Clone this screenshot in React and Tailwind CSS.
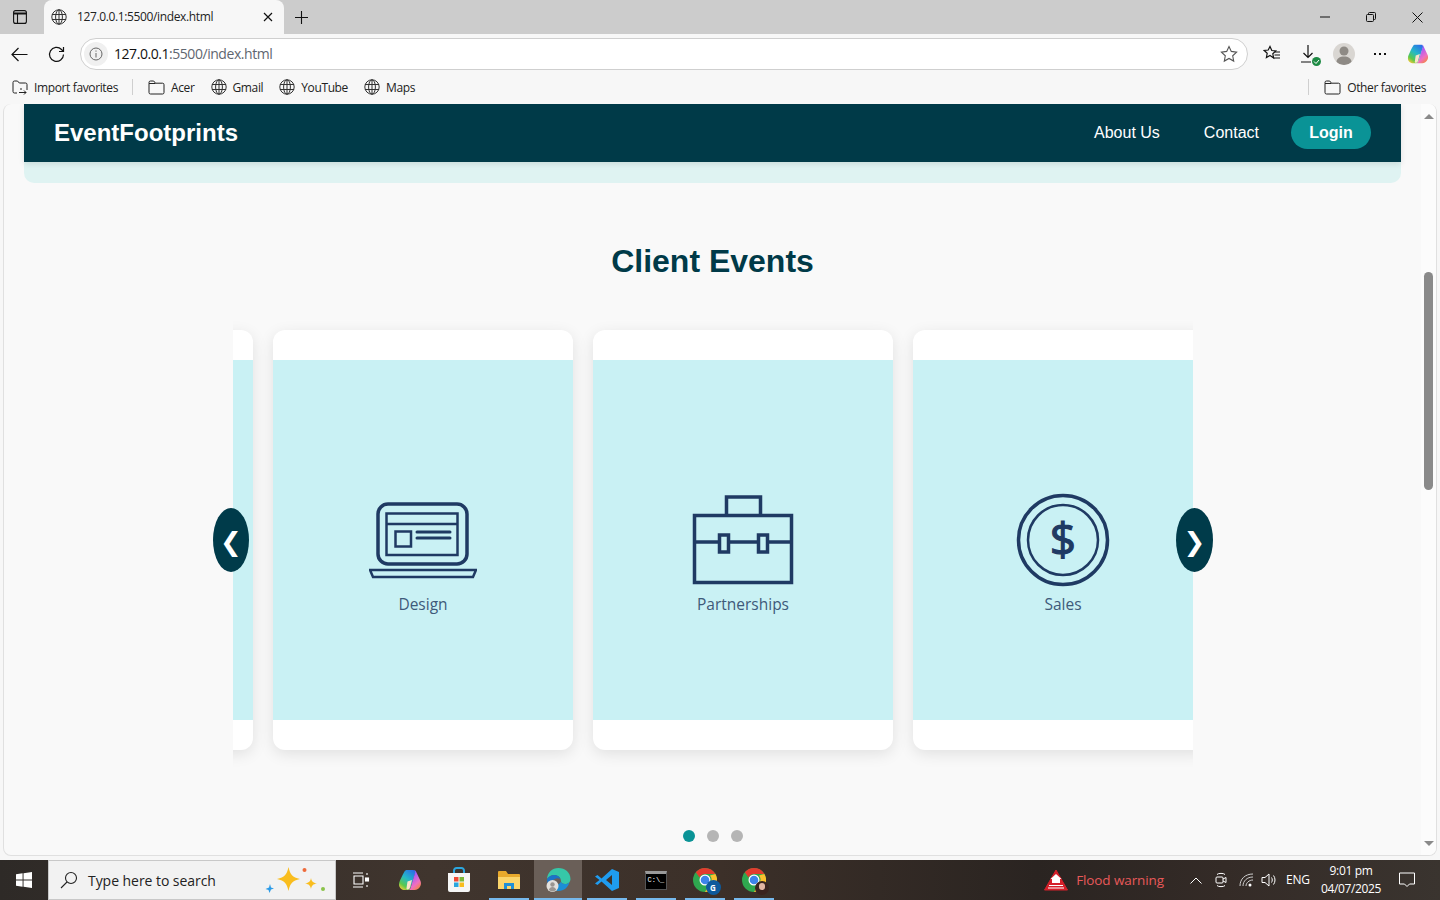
import React from 'react';

const Globe = ({ size = 16, color = '#333' }) => (
  <svg width={size} height={size} viewBox="0 0 16 16" fill="none" stroke={color} strokeWidth="1">
    <circle cx="8" cy="8" r="7.2" />
    <ellipse cx="8" cy="8" rx="3.4" ry="7.2" />
    <path d="M1 5.500h14M1 10.500h14M8 .8v14.400" />
  </svg>
);

const Folder = () => (
  <svg width="17" height="15" viewBox="0 0 17 15" fill="none" stroke="#222" strokeWidth="1">
    <path d="M1 3.500V2.500A1.500 1.500 0 0 1 2.500 1h3.200l1.800 2.200h7A1.500 1.500 0 0 1 16 4.700v7.800a1.500 1.500 0 0 1-1.500 1.500h-12A1.500 1.500 0 0 1 1 12.500V3.500h6.500" />
  </svg>
);

const Copilot = ({ size = 22, id = 'a' }) => (
  <svg width={size} height={size} viewBox="0 0 24 24" fill="none">
    <defs>
      <linearGradient id={`copA${id}`} x1="0.8" y1="0" x2="0.2" y2="1">
        <stop offset="0" stopColor="#2b6fe8" />
        <stop offset="0.45" stopColor="#24b8c8" />
        <stop offset="0.8" stopColor="#5cc94a" />
        <stop offset="1" stopColor="#f0c93a" />
      </linearGradient>
      <linearGradient id={`copB${id}`} x1="0.2" y1="0" x2="0.8" y2="1">
        <stop offset="0" stopColor="#3a6ff0" />
        <stop offset="0.35" stopColor="#b45cf0" />
        <stop offset="0.7" stopColor="#f06fc0" />
        <stop offset="1" stopColor="#f5873a" />
      </linearGradient>
    </defs>
    <path d="M9 2h6c1.400 0 2.200.7 2.600 2L12.500 20c-.5 1.400-1.400 2-2.600 2H7C3.800 22 1 20 1 16.500c0-1.500.4-2.800 1-4C4 8 5.500 5 6.500 3.500 7 2.500 8 2 9 2z" fill={`url(#copA${id})`} />
    <path d="M16 2c1 0 1.600.6 2 1.600L22.500 13c.8 2 .6 4-.4 5.500C21 20.500 19.200 22 16.500 22H10c1.200 0 2-.6 2.500-2L17 5c.3-1.200.1-2.400-1-3z" fill={`url(#copB${id})`} />
    <path d="M9.500 13.500l4.500-1.500-2 7.500c-.4 1.300-1.200 2-2.500 2-.9 0-1.200-.8-.9-2z" fill="#fbe3c8" />
  </svg>
);

const Chrome = () => (
  <svg width="24" height="24" viewBox="0 0 24 24">
    <circle cx="12" cy="12" r="12" fill="#2fa84f" />
    <path d="M12 0a12 12 0 0 1 10.400 6H12a6 6 0 0 0-5.500 3.500L2.800 4.300A12 12 0 0 1 12 0z" fill="#e33b2e" />
    <path d="M22.400 6A12 12 0 0 1 12 24l5.200-9A6 6 0 0 0 17 7.500z" fill="#fbc02d" />
    <circle cx="12" cy="12" r="5.500" fill="#fff" />
    <circle cx="12" cy="12" r="4.300" fill="#3d84ea" />
  </svg>
);

const TaskItem = ({ children, active, underline = true, className = '' }) => (
  <div className={`relative flex h-10 items-center justify-center ${active ? 'w-[48px] bg-[#6a5f58]' : 'w-[49px]'} ${className}`}>
    {children}
    {underline && <span className={`absolute bottom-0 h-[2px] bg-[#76b9ed] ${active ? 'left-0 w-full' : 'left-[5px] w-[40px]'}`} />}
  </div>
);

const Bookmark = ({ icon, label, className }) => (
  <div className={`flex items-center gap-[6px] ${className}`}>
    {icon}
    <span className="pt-[1px]">{label}</span>
  </div>
);

const BrowserChrome = () => (
  <div className="font-['Open_Sans',sans-serif] text-[12px] tracking-[-0.37px] text-[#222]">
    <div className="flex h-[34px] bg-[#cccccc]">
      <div className="flex w-[44px] items-center justify-center pr-[4px]">
        <svg width="14" height="14" viewBox="0 0 14 14" fill="none" stroke="#111" strokeWidth="1.100">
          <rect x="0.600" y="0.600" width="12.800" height="12.800" rx="2" />
          <path d="M0.600 3.500h12.800" strokeWidth="2" />
          <path d="M4.500 3.500v9.900" />
        </svg>
      </div>
      <div className="flex w-[240px] items-center rounded-t-lg bg-[#f7f7f7] pl-[7px]">
        <Globe />
        <span className="ml-[10px] text-[#222]">127.0.0.1:5500/index.html</span>
        <svg className="ml-auto mr-[11px]" width="10" height="10" viewBox="0 0 10 10" stroke="#111" strokeWidth="1.200">
          <path d="M1 1l8 8M9 1L1 9" />
        </svg>
      </div>
      <div className="ml-[11px] flex items-center">
        <svg width="13" height="13" viewBox="0 0 13 13" stroke="#111" strokeWidth="1.100">
          <path d="M6.500 0v13M0 6.500h13" />
        </svg>
      </div>
      <div className="ml-auto flex items-center">
        <div className="flex w-[46px] justify-center">
          <svg width="10" height="10" viewBox="0 0 10 10" stroke="#111"><path d="M0 5h10" /></svg>
        </div>
        <div className="flex w-[46px] justify-center">
          <svg width="10" height="10" viewBox="0 0 10 10" fill="none" stroke="#111">
            <rect x="0.500" y="2.500" width="7" height="7" rx="1" />
            <path d="M2.500 2.500V1.500a1 1 0 0 1 1-1h5a1 1 0 0 1 1 1v5a1 1 0 0 1-1 1h-1" />
          </svg>
        </div>
        <div className="flex w-[46px] justify-center">
          <svg width="11" height="11" viewBox="0 0 11 11" stroke="#111"><path d="M.5.500l10 10M10.500.500l-10 10" /></svg>
        </div>
      </div>
    </div>

    <div className="flex h-[36px] items-center bg-[#f7f7f7] pt-[4px]">
      <div className="flex w-[38px] justify-center pl-[1px]">
        <svg width="17" height="15" viewBox="0 0 17 15" fill="none" stroke="#111" strokeWidth="1.200">
          <path d="M16.500 7.500H1M7.500 1L1 7.500 7.500 14" />
        </svg>
      </div>
      <div className="flex w-[36px] justify-center">
        <svg width="17" height="17" viewBox="0 0 17 17" fill="none" stroke="#111" strokeWidth="1.200">
          <path d="M15.500 8.500a7 7 0 1 1-2-5L15.500 5.500" />
          <path d="M15.500 1v4.500H11" />
        </svg>
      </div>
      <div className="ml-[6px] flex h-[32px] w-[1168px] items-center rounded-full border border-[#cfcfcf] bg-white pl-[3px] pr-[9px]">
        <div className="flex h-6 w-6 items-center justify-center rounded-full bg-[#f0f0f0]">
          <svg width="14" height="14" viewBox="0 0 14 14" fill="none" stroke="#666">
            <circle cx="7" cy="7" r="6" />
            <path d="M7 6v4.500M7 3.500v1.200" />
          </svg>
        </div>
        <span className="ml-[6px] pb-[1px] text-[14px] tracking-[-0.45px] text-[#111]">127.0.0.1<span className="text-[#5f6670]">:5500/index.html</span></span>
        <svg className="ml-auto" width="18" height="18" viewBox="0 0 18 18" fill="none" stroke="#555" strokeWidth="1.100">
          <path d="M9 1.500l2.300 4.900 5.300.7-3.900 3.700 1 5.300L9 13.500l-4.700 2.600 1-5.300-3.900-3.700 5.300-.7z" />
        </svg>
      </div>
      <div className="ml-[15px] flex w-[18px] justify-center">
        <svg width="18" height="18" viewBox="0 0 18 18" fill="none" stroke="#111" strokeWidth="1.200">
          <path d="M7 1.500l1.800 4 4 .5-3 2.800.8 4.200L7 10.500l-3.600 2 .8-4.200-3-2.800 4-.5z" />
          <path d="M12 7h5M11.500 10h5.500M10.500 13h6.500" />
        </svg>
      </div>
      <div className="relative ml-[19px] flex w-[18px] justify-center">
        <svg width="16" height="18" viewBox="0 0 16 18" fill="none" stroke="#111" strokeWidth="1.200">
          <path d="M7 0v12M2.500 8L7 12.500 11.500 8M0 17h10" />
        </svg>
        <span className="absolute bottom-[-3px] right-[-3px] flex h-[9px] w-[9px] items-center justify-center rounded-full bg-[#1e8a44]">
          <svg width="7" height="7" viewBox="0 0 7 7" fill="none" stroke="#fff"><path d="M1 3.500l2 2 3-3.500" /></svg>
        </span>
      </div>
      <div className="ml-[15px] flex h-[22px] w-[22px] items-end justify-center overflow-hidden rounded-full bg-[#d9d6d2]">
        <svg width="22" height="22" viewBox="0 0 22 22" fill="#8e8a85">
          <circle cx="11" cy="8" r="4.500" />
          <path d="M3.500 19c0-3.500 3.300-5.500 7.500-5.500s7.500 2 7.500 5.500c-2 2-4.700 3-7.500 3s-5.500-1-7.500-3z" />
        </svg>
      </div>
      <div className="ml-[19px] flex gap-[3px]">
        <span className="h-[2px] w-[2px] bg-[#111]" />
        <span className="h-[2px] w-[2px] bg-[#111]" />
        <span className="h-[2px] w-[2px] bg-[#111]" />
      </div>
      <div className="ml-[21px]"><Copilot /></div>
    </div>

    <div className="flex h-[34px] items-center bg-[#f7f7f7] pl-[12px] pr-[14px]">
      <Bookmark
        label="Import favorites"
        icon={
          <svg width="16" height="15" viewBox="0 0 16 15" fill="none" stroke="#222">
            <path d="M1 10V2.500A1.500 1.500 0 0 1 2.500 1h3l1.800 2h6.200A1.500 1.500 0 0 1 15 4.500V10M1 10v1.500A1.500 1.500 0 0 0 2.500 13H5" />
            <path d="M7 12.500h7M12 10.500l2 2-2 2M10 9H8" />
          </svg>
        }
      />
      <span className="ml-[14px] h-4 w-px bg-[#cfcfcf]" />
      <Bookmark className="ml-[15px]" label="Acer" icon={<Folder />} />
      <Bookmark className="ml-[16px]" label="Gmail" icon={<Globe />} />
      <Bookmark className="ml-[16px]" label="YouTube" icon={<Globe />} />
      <Bookmark className="ml-[16px]" label="Maps" icon={<Globe />} />
      <span className="ml-auto h-4 w-px bg-[#cfcfcf]" />
      <Bookmark className="ml-[15px]" label="Other favorites" icon={<Folder />} />
    </div>
  </div>
);

const cards = [
  {
    label: 'Design',
    box: '369 490 108 100',
    icon: (
      <>
        <rect x="378" y="504" width="89" height="60" rx="10" strokeWidth="3.500" />
        <rect x="386.500" y="513.500" width="71" height="41.500" strokeWidth="2.500" />
        <path d="M386 524h72" strokeWidth="2.500" />
        <rect x="395.500" y="531.500" width="15.500" height="15" strokeWidth="2.500" />
        <path d="M417 532h33M417 538h33" strokeWidth="3" strokeLinecap="round" />
        <path d="M370 570h106l-3 7H373z" strokeWidth="2.500" />
      </>
    ),
  },
  {
    label: 'Partnerships',
    box: '689 490 108 100',
    icon: (
      <>
        <rect x="694.500" y="515.500" width="97" height="67" strokeWidth="3.500" />
        <path d="M726.500 515v-18h34v18" strokeWidth="3.500" />
        <path d="M694 542h25M729 542h29M768 542h24" strokeWidth="3.500" />
        <rect x="719.500" y="535" width="9" height="17" strokeWidth="3.500" />
        <rect x="758.500" y="535" width="9" height="17" strokeWidth="3.500" />
      </>
    ),
  },
  {
    label: 'Sales',
    box: '1009 490 108 100',
    icon: (
      <>
        <circle cx="1063" cy="540" r="44.500" strokeWidth="3.500" />
        <circle cx="1063" cy="540" r="35" strokeWidth="2.500" />
        <text x="1063" y="556" textAnchor="middle" fontSize="46" fill="#1f3a63" stroke="#1f3a63" strokeWidth="1.200" fontFamily="'Open Sans', sans-serif">$</text>
      </>
    ),
  },
];

const Card = ({ label, box, icon }) => (
  <div className="h-[420px] w-[300px] shrink-0 rounded-xl bg-white py-[30px] shadow-[0_4px_15px_rgba(0,0,0,0.1)]">
    <div className="flex h-[360px] flex-col items-center bg-[#c9f1f4] pt-[130px]">
      {icon && (
        <svg width="108" height="100" viewBox={box} fill="none" stroke="#1f3a63">
          {icon}
        </svg>
      )}
      <span className="mt-[4px] font-['Open_Sans',sans-serif] text-[15.500px] leading-[20px] text-[#3e5a7a]">{label}</span>
    </div>
  </div>
);

const Arrow = ({ glyph, className }) => (
  <button className={`absolute top-[198px] flex h-16 items-center justify-center rounded-[50%] bg-[#003b4a] pt-[4px] font-['DejaVu_Sans',sans-serif] text-[26px] text-white ${className}`}>
    {glyph}
  </button>
);

const Page = () => (
  <div className="mx-[3px] flex h-[752px] overflow-hidden rounded-lg border-x border-b border-[#e0e0e0] bg-[#f9f9f9] font-['Liberation_Sans',sans-serif]">
    <div className="w-[1417px] shrink-0">
      <div className="mx-[20px] rounded-b-[10px] bg-[#dff3f2] pb-[21px]">
        <header className="flex h-[58px] items-center bg-[#003a48] px-[30px] text-white shadow-[0_2px_6px_rgba(0,0,0,0.1)]">
          <span className="text-[24px] font-bold">EventFootprints</span>
          <a className="ml-auto text-[16px]">About Us</a>
          <a className="ml-[44px] text-[16px]">Contact</a>
          <a className="mb-px ml-[32px] flex h-[33px] w-[80px] items-center justify-center rounded-full bg-[#0a9396] text-[16px] font-bold">Login</a>
        </header>
      </div>

      <h1 className="mt-[60px] text-center text-[32px] font-bold leading-[36px] text-[#003a48]">Client Events</h1>

      <div className="relative ml-[209px] mt-[31px] w-[1000px]">
        <div className="mx-[20px] h-[460px] overflow-hidden pt-[20px]">
          <div className="-ml-[280px] flex gap-5">
            <Card label="" box="" />
            {cards.map((c) => <Card key={c.label} {...c} />)}
          </div>
        </div>
        <Arrow glyph="❮" className="left-0 w-[36px]" />
        <Arrow glyph="❯" className="right-0 w-[37px]" />
      </div>

      <div className="mt-[60px] flex justify-center gap-3 pl-px">
        <span className="h-3 w-3 rounded-full bg-[#0a9396]" />
        <span className="h-3 w-3 rounded-full bg-[#b5b5b5]" />
        <span className="h-3 w-3 rounded-full bg-[#b5b5b5]" />
      </div>
    </div>

    <div className="flex w-[15px] flex-col items-center bg-[#fcfcfc] pb-[9px] pt-[10px]">
      <span className="h-0 w-0 border-x-[5px] border-b-[5px] border-x-transparent border-b-[#8a8a8a]" />
      <span className="mt-[153px] h-[218px] w-[9px] rounded-full bg-[#8a8a8a]" />
      <span className="mt-auto h-0 w-0 border-x-[5px] border-t-[5px] border-x-transparent border-t-[#8a8a8a]" />
    </div>
  </div>
);

const Taskbar = () => (
  <div className="mt-[4px] flex h-10 items-center bg-[linear-gradient(90deg,#2e2a27_0%,#40352e_30%,#3c3029_50%,#2a2421_72%,#342b27_85%,#3a342f_100%)] font-['Open_Sans',sans-serif] text-white">
    <div className="flex w-[48px] justify-center pr-[1px]">
      <svg width="16" height="16" viewBox="0 0 17 17" fill="#fff">
        <path d="M0 2.400L7 1.400v6.600H0zM8 1.300L17 0v8H8zM0 9h7v6.600L0 14.600zM8 9h9v8l-9-1.300z" />
      </svg>
    </div>
    <div className="flex h-10 w-[288px] items-center border border-[#c8c8c8] bg-[#f2f2f2] pl-[11px] text-[14px] text-[#222]">
      <svg width="18" height="18" viewBox="0 0 18 18" fill="none" stroke="#222" strokeWidth="1.100">
        <circle cx="11" cy="7" r="5.500" />
        <path d="M7 11l-6 6" />
      </svg>
      <span className="ml-[10px] tracking-[-0.05px]">Type here to search</span>
      <svg className="ml-auto mr-[9px]" width="64" height="34" viewBox="262 863 64 34">
        <path d="M288.500 867c1.800 8 3.800 10 11.500 12-7.700 2-9.700 4-11.500 12-1.800-8-3.800-10-11.500-12 7.700-2 9.700-4 11.500-12z" fill="#f9bd1e" />
        <path d="M311 878c.7 3.500 1.800 4.800 6 5.500-4.200.7-5.300 2-6 5.500-.7-3.500-1.800-4.800-6-5.500 4.200-.7 5.300-2 6-5.500z" fill="#f9bd1e" />
        <circle cx="304.500" cy="870" r="2" fill="#ee6a3a" />
        <circle cx="323" cy="889" r="2" fill="#8bc34a" />
        <path d="M270 884l1 3.500 3 1-3 1-1.500 3.500-1-3-3-1 3.500-1.500z" fill="#2b9be8" />
      </svg>
    </div>

    <TaskItem underline={false}>
      <svg width="18" height="16" viewBox="0 0 18 16" fill="none" stroke="#fff" strokeWidth="1.100">
        <path d="M1 1h10M1 15h10M2 4h9v8H2zM15 1v2M15 13v2" />
        <rect x="13.500" y="6" width="3" height="3" fill="#fff" />
      </svg>
    </TaskItem>
    <TaskItem underline={false}><Copilot size={24} id="b" /></TaskItem>
    <TaskItem underline={false}>
      <svg width="24" height="26" viewBox="0 0 24 26">
        <path d="M7 6V3.500A2.500 2.500 0 0 1 9.500 1h5A2.500 2.500 0 0 1 17 3.500V6" fill="none" stroke="#2ba6de" strokeWidth="2" />
        <path d="M1 6h22v17a2 2 0 0 1-2 2H3a2 2 0 0 1-2-2z" fill="#f6f6f6" />
        <rect x="7" y="10" width="4.500" height="4.500" fill="#ef4b36" />
        <rect x="12.500" y="10" width="4.500" height="4.500" fill="#7cb83a" />
        <rect x="7" y="15.500" width="4.500" height="4.500" fill="#2ba6de" />
        <rect x="12.500" y="15.500" width="4.500" height="4.500" fill="#f9bd1e" />
      </svg>
    </TaskItem>
    <TaskItem className="ml-px">
      <svg width="22" height="20" viewBox="0 0 22 20">
        <path d="M0 2a1 1 0 0 1 1-1h7l2 3h11a1 1 0 0 1 1 1v14H0z" fill="#e8a92c" />
        <path d="M0 7h22v12H0z" fill="#fbd56b" />
        <path d="M6 19v-6h10v6h-3v-3H9v3z" fill="#1f8fd6" />
      </svg>
    </TaskItem>
    <TaskItem active className="ml-px">
      <svg width="25" height="26" viewBox="0 0 25 26">
        <path d="M12.500 1C19 1 24.500 5.500 24.500 12c0 3-2.500 5-5.500 5-2.500 0-4-1-4-2.500 0-4-3-6.500-7-6.500C5.500 8 3 9.500 1 12 1.500 5.500 6 1 12.500 1z" fill="#36c7a8" />
        <path d="M1 12c2-2.500 4.500-4 7-4 3 0 5.500 1.500 6.500 4-3-1.500-7-.5-8.500 3-1 2.500 0 7 4.500 9C5 23 1 18 1 12z" fill="#1a74c9" />
        <path d="M15 14.500c0 1.500 1.500 2.500 4 2.500 2 0 3.500-.5 4.500-2-1 5-5.500 9-11 9-5 0-7-4-6-8 1.500 3.500 6 3 8.500-1.500z" fill="#1b8ed6" />
        <circle cx="6.500" cy="19" r="6" fill="#e3e0dc" />
        <circle cx="6.500" cy="17.500" r="2.200" fill="#9a9591" />
        <path d="M2.800 23c.5-2 2-3 3.700-3s3.200 1 3.700 3a6 6 0 0 1-7.400 0z" fill="#9a9591" />
      </svg>
    </TaskItem>
    <TaskItem>
      <svg width="24" height="24" viewBox="0 0 24 24">
        <path d="M17 1l7 3v16l-7 3L6.500 13.500 2.500 17 0 15.500 4.500 12 0 8.500 2.500 7l4 3.500zM17 7l-6 5 6 5z" fill="#1f9cf0" fillRule="evenodd" />
      </svg>
    </TaskItem>
    <TaskItem>
      <div className="h-[19px] w-[22px] border border-[#555] border-t-[3px] border-t-[#9a9a9a] bg-black pl-[2px] font-['Liberation_Mono',monospace] text-[7px] leading-[12px] text-white">C:\_</div>
    </TaskItem>
    <TaskItem>
      <div className="relative">
        <Chrome />
        <span className="absolute bottom-[-3px] right-[-4px] flex h-[15px] w-[15px] items-center justify-center rounded-full bg-[#0e5a9c] text-[8px] font-bold leading-none">G</span>
      </div>
    </TaskItem>
    <TaskItem>
      <div className="relative">
        <Chrome />
        <span className="absolute bottom-[-3px] right-[-3px] h-[14px] w-[14px] rounded-full bg-[#3a2420]">
          <span className="mx-auto mt-[2px] block h-[7px] w-[6px] rounded-full bg-[#e3b5a3]" />
        </span>
      </div>
    </TaskItem>

    <div className="ml-auto flex h-10 items-center">
      <svg width="24" height="22" viewBox="0 0 24 22">
        <path d="M12 1L23.500 21H.5z" fill="#d5202a" stroke="#d5202a" strokeLinejoin="round" />
        <path d="M12 5l5.500 5H16v4H8v-4H6.500z" fill="#fff" />
        <path d="M5 16.500h14M4 19h16" stroke="#fff" strokeWidth="1" />
      </svg>
      <span className="ml-[8px] text-[13.500px] tracking-[-0.1px] text-[#e8595a]">Flood warning</span>
      <svg className="ml-[26px]" width="12" height="7" viewBox="0 0 12 7" fill="none" stroke="#fff"><path d="M.5 6.500L6 1l5.500 5.500" /></svg>
      <svg className="ml-[13px]" width="12" height="16" viewBox="0 0 12 16" fill="none" stroke="#fff">
        <path d="M2 2.500C3 1 9 1 10 2.500M2 13.500c1 1.500 7 1.500 8 0" />
        <rect x="1" y="5" width="7" height="6" rx="1" />
        <path d="M8 7l3-1.500v5L8 9" />
      </svg>
      <svg className="ml-[12px]" width="15" height="14" viewBox="0 0 15 14" fill="none" stroke="#cfcfcf">
        <path d="M1 13C1 6 6 1 14 1M4 13c0-5 4-9 10-9M7 13c0-3 3-6 7-6" />
        <circle cx="11" cy="12" r="1.500" fill="#fff" stroke="none" />
      </svg>
      <svg className="ml-[7px]" width="16" height="16" viewBox="0 0 16 16" fill="none" stroke="#fff">
        <path d="M1 5.500h3L8 2v12l-4-3.500H1zM10.500 5.500c1 1.500 1 3.500 0 5M12.500 3.500c2 2.500 2 6.500 0 9" />
      </svg>
      <span className="ml-[9px] w-[25px] text-[12px] tracking-[-0.2px]">ENG</span>
      <div className="ml-[10px] flex w-[60px] flex-col items-center text-[12px] leading-[18px] tracking-[-0.35px]">
        <span>9:01 pm</span>
        <span>04/07/2025</span>
      </div>
      <svg className="ml-[18px] mr-[25px]" width="16" height="16" viewBox="0 0 16 16" fill="none" stroke="#fff">
        <path d="M.5 1h15v11h-5L8 14.500 5.500 12h-5z" />
      </svg>
    </div>
  </div>
);

export default function App() {
  return (
    <div className="h-[900px] w-[1440px] overflow-hidden bg-[#f7f7f7]">
      <BrowserChrome />
      <Page />
      <Taskbar />
    </div>
  );
}
